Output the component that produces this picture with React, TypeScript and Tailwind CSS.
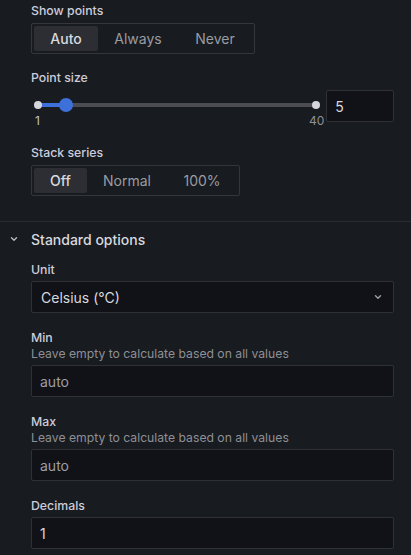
import React from 'react';

const font = { fontFamily: 'Inter, "Noto Sans", sans-serif' };

const Label: React.FC<{ children: React.ReactNode }> = ({ children }) => (
  <div className="text-[12.3px] font-medium leading-[16px] text-[#ccccdc]">{children}</div>
);

const Hint: React.FC<{ children: React.ReactNode }> = ({ children }) => (
  <div className="text-[12.2px] leading-[16px] text-[#8e9097]">{children}</div>
);

const Radio: React.FC<{ options: { label: string; w: string }[]; active: number }> = ({ options, active }) => (
  <div className="mt-[4px] inline-flex h-[31px] items-center rounded-[2px] border border-[#34363c] p-[2px]">
    {options.map((o, i) => (
      <div
        key={o.label}
        className={`flex h-[25px] items-center justify-center rounded-[2px] text-[14px] ${o.w} ${
          i === active ? 'bg-[#2c2e33] font-medium text-[#d8d9df]' : 'text-[#9a9ca3]'
        }`}
      >
        {o.label}
      </div>
    ))}
  </div>
);

const Input: React.FC<{ value: string; muted?: boolean }> = ({ value, muted }) => (
  <div className="mt-[3px] flex h-[32px] items-center rounded-[2px] border border-[#2f3136] bg-[#111217] px-[8px] text-[14px]">
    <span className={muted ? 'text-[#9c9ea5]' : 'text-[#d8d9df]'}>{value}</span>
  </div>
);

const Chevron: React.FC<{ className?: string }> = ({ className }) => (
  <svg width="10" height="10" viewBox="0 0 10 10" className={className} fill="none">
    <path d="M2.5 3.8 L5 6.2 L7.5 3.8" stroke="currentColor" strokeWidth="1.4" strokeLinecap="round" strokeLinejoin="round" />
  </svg>
);

export default function App() {
  return (
    <div className="h-[555px] w-[411px] overflow-hidden bg-[#181b1f]" style={font}>
      <div className="pl-[31px] pr-[17px] pt-[3px]">
        <Label>Show points</Label>
        <Radio
          active={0}
          options={[
            { label: 'Auto', w: 'w-[64px]' },
            { label: 'Always', w: 'w-[80px]' },
            { label: 'Never', w: 'w-[74px]' },
          ]}
        />

        <div className="mt-[16px]">
          <Label>Point size</Label>
          <div className="mt-[4px] flex items-start">
            <div className="relative h-[32px] w-[296px]">
              <div className="absolute left-[7px] right-[8px] top-[13px] h-[4px] rounded-full bg-[#4b4d53]" />
              <div className="absolute left-[7px] top-[13px] h-[4px] w-[28px] rounded-full bg-[#3d71d9]" />
              <div className="absolute left-[3px] top-[11px] h-[8px] w-[8px] rounded-full bg-[#d6d7de]" />
              <div className="absolute left-[281px] top-[11px] h-[8px] w-[8px] rounded-full bg-[#d6d7de]" />
              <div className="absolute left-[28px] top-[8px] h-[14px] w-[14px] rounded-full bg-[#3d71d9]" />
              <div className="absolute left-[4px] top-[23px] text-[12px] leading-[16px] text-[#c0c2c9]">1</div>
              <div className="absolute left-[278px] top-[23px] text-[12px] leading-[16px] text-[#8e9097]">40</div>
            </div>
            <div className="flex h-[32px] w-[68px] items-center rounded-[2px] border border-[#2f3136] bg-[#111217] px-[8px] text-[14px] text-[#d8d9df]">
              5
            </div>
          </div>
        </div>

        <div className="mt-[23px]">
          <Label>Stack series</Label>
          <Radio
            active={0}
            options={[
              { label: 'Off', w: 'w-[53px]' },
              { label: 'Normal', w: 'w-[80px]' },
              { label: '100%', w: 'w-[70px]' },
            ]}
          />
        </div>
      </div>

      <div className="mt-[25px] border-t border-[#2a2c31]" />

      <div className="flex h-[34px] items-center">
        <Chevron className="ml-[9px] text-[#b8bac1]" />
        <span className="ml-[12px] text-[14px] font-medium text-[#d8d9df]">Standard options</span>
      </div>

      <div className="pl-[31px] pr-[17px]">
        <div className="mt-[6px]">
          <Label>Unit</Label>
          <div className="mt-[3px] flex h-[32px] items-center justify-between rounded-[2px] border border-[#2f3136] bg-[#111217] pl-[9px] pr-[10px] text-[14px] text-[#d8d9df]">
            <span>Celsius (°C)</span>
            <Chevron className="text-[#9c9ea5]" />
          </div>
        </div>

        <div className="mt-[17px]">
          <Label>Min</Label>
          <Hint>Leave empty to calculate based on all values</Hint>
          <Input value="auto" muted />
        </div>

        <div className="mt-[17px]">
          <Label>Max</Label>
          <Hint>Leave empty to calculate based on all values</Hint>
          <Input value="auto" muted />
        </div>

        <div className="mt-[17px]">
          <Label>Decimals</Label>
          <Input value="1" />
        </div>
      </div>
    </div>
  );
}
